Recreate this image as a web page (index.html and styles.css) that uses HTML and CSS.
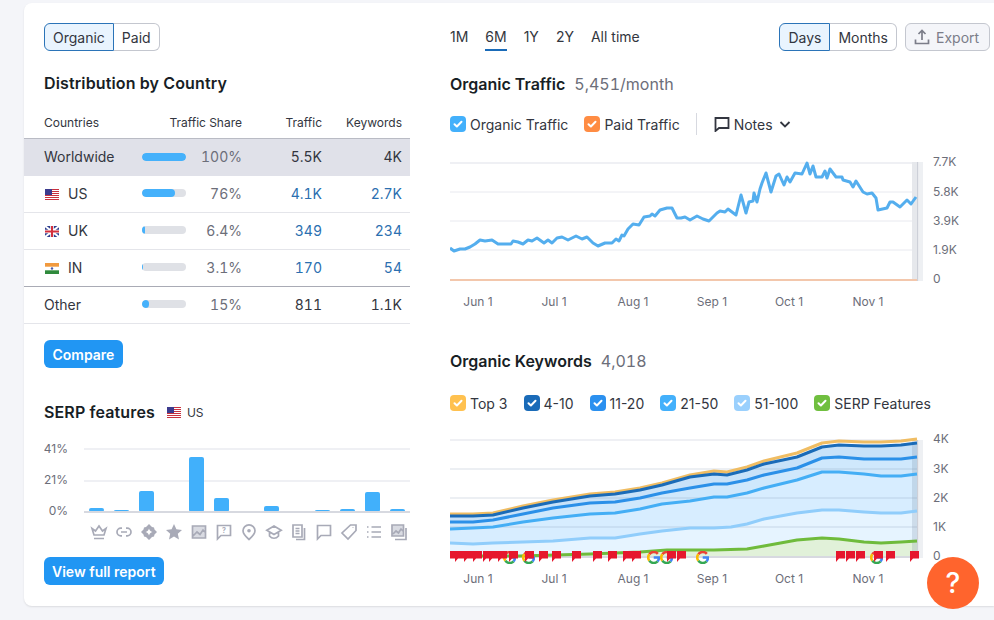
FILE: index.html
```html
<!DOCTYPE html>
<html lang="en">
<head>
    <meta charset="UTF-8">
    <meta name="viewport" content="width=device-width, initial-scale=1.0">
    <title>Domain Overview</title>
    <link rel="stylesheet" href="styles.css">
</head>
<body>
    <svg class="defs" width="0" height="0">
        <symbol id="flag-us" viewBox="0 0 14 11">
            <rect width="14" height="11" fill="#fff"/>
            <path d="M0 .5h14M0 2.5h14M0 4.5h14M0 6.5h14M0 8.5h14M0 10.5h14" stroke="#c9313e" stroke-width="1"/>
            <rect width="7" height="6" fill="#3c3b8e"/>
        </symbol>
        <symbol id="flag-uk" viewBox="0 0 14 11">
            <rect width="14" height="11" fill="#2f3f8f"/>
            <path d="M0 0l14 11M14 0L0 11" stroke="#fff" stroke-width="2"/>
            <path d="M7 0v11M0 5.5h14" stroke="#fff" stroke-width="3.6"/>
            <path d="M7 0v11M0 5.5h14" stroke="#d3303c" stroke-width="2"/>
        </symbol>
        <symbol id="flag-in" viewBox="0 0 14 11">
            <rect width="14" height="11" fill="#fff"/>
            <rect width="14" height="3.7" fill="#f19a3e"/>
            <rect y="7.3" width="14" height="3.7" fill="#2f8a3c"/>
            <circle cx="7" cy="5.5" r="1.2" fill="#4a5aa8"/>
        </symbol>
        <symbol id="check" viewBox="0 0 16 16">
            <path d="M4.5 8.2l2.4 2.3 4.6-4.7" fill="none" stroke="#fff" stroke-width="2" stroke-linecap="round" stroke-linejoin="round"/>
        </symbol>
        <symbol id="note" viewBox="0 0 11 11">
            <path d="M0 0h9v7.500H3L0 11z" fill="#e6172d"/>
        </symbol>
        <symbol id="g-logo" viewBox="0 0 12 12">
            <g fill="none" stroke-width="2.4">
                <path d="M10 2.6A5 5 0 0 0 2.2 3" stroke="#ea4335"/>
                <path d="M2.2 3a5 5 0 0 0 0 6" stroke="#fbbc05"/>
                <path d="M2.2 9a5 5 0 0 0 7.6.5" stroke="#34a853"/>
                <path d="M9.8 9.5A5 5 0 0 0 11 6H6.2" stroke="#4285f4"/>
            </g>
        </symbol>
    </svg>

    <main class="card">
        <section class="left">
            <div class="toggle">
                <button class="active">Organic</button>
                <button>Paid</button>
            </div>

            <h2 class="country-title">Distribution by Country</h2>

            <table class="countries">
                <thead>
                    <tr>
                        <th class="c-name">Countries</th>
                        <th colspan="2" class="number">Traffic Share</th>
                        <th class="number c-traffic">Traffic</th>
                        <th class="number c-keywords">Keywords</th>
                    </tr>
                </thead>
                <tbody>
                    <tr class="selected">
                        <td>Worldwide</td>
                        <td><div class="bar"><span style="width: 100%"></span></div></td>
                        <td class="number share">100%</td>
                        <td class="number">5.5K</td>
                        <td class="number">4K</td>
                    </tr>
                    <tr>
                        <td><svg class="flag"><use href="#flag-us"/></svg>US</td>
                        <td><div class="bar"><span style="width: 76%"></span></div></td>
                        <td class="number share">76%</td>
                        <td class="number link">4.1K</td>
                        <td class="number link">2.7K</td>
                    </tr>
                    <tr>
                        <td><svg class="flag"><use href="#flag-uk"/></svg>UK</td>
                        <td><div class="bar"><span style="width: 6.4%"></span></div></td>
                        <td class="number share">6.4%</td>
                        <td class="number link">349</td>
                        <td class="number link">234</td>
                    </tr>
                    <tr class="last-country">
                        <td><svg class="flag"><use href="#flag-in"/></svg>IN</td>
                        <td><div class="bar"><span style="width: 3.1%"></span></div></td>
                        <td class="number share">3.1%</td>
                        <td class="number link">170</td>
                        <td class="number link">54</td>
                    </tr>
                    <tr>
                        <td>Other</td>
                        <td><div class="bar"><span style="width: 15%"></span></div></td>
                        <td class="number share">15%</td>
                        <td class="number">811</td>
                        <td class="number">1.1K</td>
                    </tr>
                </tbody>
            </table>

            <button class="primary compare">Compare</button>

            <div class="serp-head">
                <h2>SERP features</h2>
                <svg class="flag"><use href="#flag-us"/></svg>
                <span>US</span>
            </div>

            <svg class="serp-chart" viewBox="44 440 366 105" width="366" height="105">
                <path class="grid" d="M84 449H410M84 481H410"/>
                <g class="serp-bars">
                    <rect x="89" y="508" width="15" height="4"/>
                    <rect x="114" y="510" width="15" height="2"/>
                    <rect x="139" y="491" width="15" height="21"/>
                    <rect x="189" y="457" width="15" height="55"/>
                    <rect x="214" y="498" width="15" height="14"/>
                    <rect x="264" y="506" width="15" height="6"/>
                    <rect x="315" y="510" width="15" height="2"/>
                    <rect x="340" y="509" width="15" height="3"/>
                    <rect x="365" y="492" width="15" height="20"/>
                    <rect x="390" y="509" width="15" height="3"/>
                </g>
                <path class="axis" d="M84 512H410"/>
                <text class="tick" x="68" y="453" text-anchor="end">41%</text>
                <text class="tick" x="68" y="484" text-anchor="end">21%</text>
                <text class="tick" x="68" y="515" text-anchor="end">0%</text>

                <g class="serp-icons">
                    <g transform="translate(91 524)"><path d="M1 4.500l3.500 2.500L8 2l3.500 5L15 4.500l-2 6.500H3zM3 14.500h10"/></g>
                    <g transform="translate(116 524)"><path d="M6 4.200H4.800a3.800 3.800 0 0 0 0 7.600H6M10 4.200h1.200a3.800 3.800 0 0 1 0 7.600H10M5 8h6"/></g>
                    <g transform="translate(141 524)"><path class="solid" fill-rule="evenodd" d="M8 0l3 3 2 .5.5 2L16 8l-2.500 2.500-.5 2-2 .5L8 16l-3-3-2-.5-.5-2L0 8l2.500-2.500.5-2 2-.5zM8 4.500C7.500 6.500 6.500 7.500 4.500 8c2 .5 3 1.500 3.500 3.500.5-2 1.500-3 3.500-3.500-2-.5-3-1.500-3.500-3.500z"/></g>
                    <g transform="translate(166 524)"><path class="solid" d="M8 0l2.400 5.300 5.600.6-4.200 3.800L13 15.500 8 12.600l-5 2.900 1.200-5.800L0 5.900l5.600-.6z"/></g>
                    <g transform="translate(191 524)"><rect x="1.500" y="2" width="13" height="12" class="soft"/><path d="M1.500 2h13v12h-13zM2 12l4-4 3 2.500 3-4.500 2.500 2.500"/></g>
                    <g transform="translate(216 524)"><path d="M1.500 1.500h13v10H5L1.500 15z"/><text class="mini" x="8" y="9.300" text-anchor="middle">?</text></g>
                    <g transform="translate(241 524)"><path d="M8 15.500C4.500 12.500 2 9.800 2 6.800a6 6 0 0 1 12 0c0 3-2.500 5.700-6 8.700z"/><circle class="solid" cx="8" cy="6.800" r="1.800"/></g>
                    <g transform="translate(266 524)"><path d="M8 2L.8 6.300 8 10.500l7.200-4.200zM3.500 8.500V12c2.500 3 6.500 3 9 0V8.500"/></g>
                    <g transform="translate(291 524)"><path d="M2 1h9v12H2zM4.500 4.500h4M4.500 7h4M4.500 9.500h4M13.500 4v11.500H5"/></g>
                    <g transform="translate(316 524)"><path d="M1.500 1.500h13v10H5L1.500 15z"/></g>
                    <g transform="translate(341 524)"><path d="M9.500 1H15v5.500L7 15 1 9zM12 3.500v.5"/></g>
                    <g transform="translate(366 524)"><path d="M5.500 3H15M5.500 8H15M5.500 13H15M1 3h1.500M1 8h1.500M1 13h1.500"/></g>
                    <g transform="translate(391 524)"><rect x="1" y="1" width="11.500" height="11" class="soft"/><path d="M1 1h11.500v11H1zM2 10l3-3 2.500 2 2.500-4 2 2M15 4v11.500H4"/></g>
                </g>
            </svg>

            <button class="primary report">View full report</button>
        </section>

        <section class="right">
            <div class="top-bar">
                <nav class="ranges">
                    <a>1M</a>
                    <a class="current">6M</a>
                    <a>1Y</a>
                    <a>2Y</a>
                    <a>All time</a>
                </nav>
                <div class="top-actions">
                    <div class="toggle">
                        <button class="active">Days</button>
                        <button>Months</button>
                    </div>
                    <button class="export">
                        <svg width="16" height="16" viewBox="0 0 16 16"><path d="M8 11V2M4.500 5L8 1.500 11.500 5M1.500 10.500v4h13v-4" fill="none" stroke="currentColor" stroke-width="1.700"/></svg>
                        Export
                    </button>
                </div>
            </div>

            <h2 class="chart-title traffic-title">Organic Traffic <span>5,451/month</span></h2>

            <div class="legend">
                <label><i class="box c-organic"><svg><use href="#check"/></svg></i>Organic Traffic</label>
                <label><i class="box c-paid"><svg><use href="#check"/></svg></i>Paid Traffic</label>
                <div class="divider"></div>
                <div class="notes">
                    <svg width="16" height="16" viewBox="0 0 16 16"><path d="M1.500 2h13v10H5l-3.500 3z" fill="none" stroke="#333640" stroke-width="1.800"/></svg>
                    Notes
                    <svg class="chevron" width="12" height="12" viewBox="0 0 12 12"><path d="M1.500 4L6 8.500 10.500 4" fill="none" stroke="#333640" stroke-width="1.800"/></svg>
                </div>
            </div>

            <svg class="chart traffic-chart" viewBox="450 155 540 157" width="540" height="157">
                <path class="grid top" d="M450 163H917"/>
                <path class="grid" d="M450 192H917M450 221H917M450 250H917"/>
                <rect class="band" x="912" y="162" width="5" height="119"/>
                <rect class="band-line" x="917" y="162" width="1.500" height="119"/>
                <rect class="band-edge" x="918.500" y="162" width="4.500" height="119"/>
                <path class="paid-line" d="M450 280H917"/>
                <polyline class="traffic-line" points="450,248 454,251 460,249 465,249 470,247 475,244 480,240 485,241 492,240 498,244 503,244 511,244 513,241 518,242 523,244 528,240 532,241 537,238 544,243 548,240 552,243 557,238 562,237 568,240 576,236 582,239 587,237 593,243 598,246 605,243 612,243 616,239 619,241 622,235 624,236 628,229 633,224 639,225 644,217 650,216 652,214 655,216 660,210 667,208 672,208 677,218 681,218 685,217 690,220 697,216 703,219 709,221 713,217 717,213 720,211 725,212 728,209 736,215 741,195 746,213 749,202 753,201 754,193 757,202 760,189 762,183 766,173 771,192 776,176 779,174 784,185 787,177 790,182 795,173 802,174 807,163 810,174 813,166 816,177 822,177 825,171 827,178 830,169 836,177 842,177 843,180 850,182 853,187 856,181 863,192 867,194 872,193 876,198 878,210 887,208 890,202 893,202 900,207 907,200 911,204 916,197"/>
                <g class="tick" text-anchor="middle">
                    <text x="478" y="306">Jun 1</text>
                    <text x="554" y="306">Jul 1</text>
                    <text x="633" y="306">Aug 1</text>
                    <text x="712" y="306">Sep 1</text>
                    <text x="789" y="306">Oct 1</text>
                    <text x="868" y="306">Nov 1</text>
                </g>
                <g class="tick">
                    <text x="933" y="166">7.7K</text>
                    <text x="933" y="196">5.8K</text>
                    <text x="933" y="225">3.9K</text>
                    <text x="933" y="254">1.9K</text>
                    <text x="933" y="283">0</text>
                </g>
            </svg>

            <h2 class="chart-title keywords-title">Organic Keywords <span>4,018</span></h2>

            <div class="legend legend-keywords">
                <label><i class="box c-top3"><svg><use href="#check"/></svg></i>Top 3</label>
                <label><i class="box c-4-10"><svg><use href="#check"/></svg></i>4-10</label>
                <label><i class="box c-11-20"><svg><use href="#check"/></svg></i>11-20</label>
                <label><i class="box c-21-50"><svg><use href="#check"/></svg></i>21-50</label>
                <label><i class="box c-51-100"><svg><use href="#check"/></svg></i>51-100</label>
                <label><i class="box c-serp"><svg><use href="#check"/></svg></i>SERP Features</label>
            </div>

            <svg class="chart keywords-chart" viewBox="450 430 540 160" width="540" height="160">
                <path class="grid top" d="M450 440H917"/>

                <!-- opaque bands, painted from the top series down -->
                <g class="areas">
                    <polygon class="a-4" points="450,516 473,516 493,515 523,508 553,502 590,496 615,494 640,490 662,485 690,477 714,474 727,475 747,470 764,464 797,457 822,447 839,445 864,446 881,446 901,445 917,443 917,557 450,557"/>
                    <polygon class="a-11" points="450,522 473,522 493,520 523,514 553,508 590,503 615,502 640,498 662,493 690,488 714,484 727,484 747,480 764,475 797,468 822,458 839,457 864,459 881,459 901,459 917,457 917,557 450,557"/>
                    <polygon class="a-21" points="450,529 473,528 493,527 523,522 553,518 590,514 615,513 640,509 662,504 690,501 714,497 727,497 747,493 764,488 797,480 822,472 839,472 864,474 881,476 901,476 917,474 917,557 450,557"/>
                    <polygon class="a-51" points="450,543 473,544 493,543 523,542 553,541 590,538 615,538 640,534 662,531 690,528 714,528 731,527 747,524 764,519 797,513 822,510 839,510 864,512 881,513 901,513 917,511 917,557 450,557"/>
                    <polygon class="a-serp" points="450,556 520,556 590,554 640,552 667,550 714,550 747,549 764,546 797,540 822,538 839,539 864,542 881,543 901,542 917,541 917,557 450,557"/>
                </g>
                <path class="grid over" d="M450 469H917M450 498H917M450 527H917"/>
                <rect class="band-over" x="912" y="440" width="5" height="118"/>
                <rect class="band-line" x="917" y="440" width="1.500" height="118"/>
                <rect class="band-edge" x="918.500" y="440" width="4.500" height="118"/>
                <path class="axis" d="M450 557H917"/>

                <polyline class="kw-line l-serp" points="450,556 520,556 590,554 640,552 667,550 714,550 747,549 764,546 797,540 822,538 839,539 864,542 881,543 901,542 917,541"/>
                <polyline class="kw-line l-51" points="450,543 473,544 493,543 523,542 553,541 590,538 615,538 640,534 662,531 690,528 714,528 731,527 747,524 764,519 797,513 822,510 839,510 864,512 881,513 901,513 917,511"/>
                <polyline class="kw-line l-21" points="450,529 473,528 493,527 523,522 553,518 590,514 615,513 640,509 662,504 690,501 714,497 727,497 747,493 764,488 797,480 822,472 839,472 864,474 881,476 901,476 917,474"/>
                <polyline class="kw-line l-11" points="450,522 473,522 493,520 523,514 553,508 590,503 615,502 640,498 662,493 690,488 714,484 727,484 747,480 764,475 797,468 822,458 839,457 864,459 881,459 901,459 917,457"/>
                <polyline class="kw-line l-top" points="450,514 473,514 493,513 523,506 553,500 590,494 615,492 640,488 662,483 690,475 714,471 727,472 747,467 764,461 797,453 822,443 839,441 864,442 881,442 901,441 917,439"/>
                <polyline class="kw-line l-4" points="450,516 473,516 493,515 523,508 553,502 590,496 615,494 640,490 662,485 690,477 714,474 727,475 747,470 764,464 797,457 822,447 839,445 864,446 881,446 901,445 917,443"/>

                <use href="#g-logo" x="503" y="551" width="13" height="13"/>
                <use href="#g-logo" x="522" y="551" width="13" height="13"/>
                <use href="#g-logo" x="647" y="551" width="13" height="13"/>
                <use href="#g-logo" x="660" y="551" width="13" height="13"/>
                <use href="#g-logo" x="696" y="551" width="13" height="13"/>
                <use href="#g-logo" x="870" y="551" width="13" height="13"/>

                <use href="#note" x="446" y="551" width="11" height="11"/>
                <use href="#note" x="455" y="551" width="11" height="11"/>
                <use href="#note" x="464" y="551" width="11" height="11"/>
                <use href="#note" x="473" y="551" width="11" height="11"/>
                <use href="#note" x="483" y="551" width="11" height="11"/>
                <use href="#note" x="489" y="551" width="11" height="11"/>
                <use href="#note" x="498" y="551" width="11" height="11"/>
                <use href="#note" x="509" y="551" width="11" height="11"/>
                <use href="#note" x="525" y="551" width="11" height="11"/>
                <use href="#note" x="539" y="551" width="11" height="11"/>
                <use href="#note" x="552" y="551" width="11" height="11"/>
                <use href="#note" x="572" y="551" width="11" height="11"/>
                <use href="#note" x="593" y="551" width="11" height="11"/>
                <use href="#note" x="608" y="551" width="11" height="11"/>
                <use href="#note" x="623" y="551" width="11" height="11"/>
                <use href="#note" x="632" y="551" width="11" height="11"/>
                <use href="#note" x="667" y="551" width="11" height="11"/>
                <use href="#note" x="677" y="551" width="11" height="11"/>
                <use href="#note" x="836" y="551" width="11" height="11"/>
                <use href="#note" x="846" y="551" width="11" height="11"/>
                <use href="#note" x="856" y="551" width="11" height="11"/>
                <use href="#note" x="874" y="551" width="11" height="11"/>
                <use href="#note" x="886" y="551" width="11" height="11"/>
                <use href="#note" x="910" y="551" width="11" height="11"/>

                <g class="tick" text-anchor="middle">
                    <text x="478" y="583">Jun 1</text>
                    <text x="554" y="583">Jul 1</text>
                    <text x="633" y="583">Aug 1</text>
                    <text x="712" y="583">Sep 1</text>
                    <text x="789" y="583">Oct 1</text>
                    <text x="868" y="583">Nov 1</text>
                </g>
                <g class="tick">
                    <text x="933" y="443">4K</text>
                    <text x="933" y="473">3K</text>
                    <text x="933" y="502">2K</text>
                    <text x="933" y="531">1K</text>
                    <text x="933" y="560">0</text>
                </g>
            </svg>
        </section>
    </main>

    <button class="help">?</button>
</body>
</html>
```

FILE: styles.css
```css
html, body {
    height: 100%;
}

body {
    margin: 0;
    background-color: #f4f5f9;
    color: #333640;
    font-family: Inter, 'Noto Sans', sans-serif;
    font-size: 14px;
    overflow: hidden;
}

button {
    font-family: inherit;
}

.defs {
    position: absolute;
}

.card {
    display: flex;
    gap: 40px;
    width: 970px;
    height: 603px;
    margin: 3px 0 0 24px;
    background: white;
    border-radius: 8px 0 0 8px;
    box-shadow: 0 1px 2px rgba(0,0,0,0.1);
}

.left {
    width: 386px;
    flex-shrink: 0;
    padding-top: 20px;
}

.right {
    width: 544px;
    padding-top: 20px;
}

h2 {
    margin: 0;
    font-size: 16px;
    line-height: 20px;
    font-weight: 600;
    color: #181e25;
}

/* toggles */
.toggle {
    display: inline-flex;
    height: 28px;
}

.left > .toggle {
    margin-left: 20px;
    display: flex;
    width: max-content;
}

.toggle button {
    height: 28px;
    padding: 0 8px;
    border: 1px solid #c4c7cf;
    background: white;
    color: #333640;
    font-size: 14px;
}

.toggle button:first-child {
    border-radius: 6px 0 0 6px;
}

.toggle button:last-child {
    border-radius: 0 6px 6px 0;
    border-left: none;
}

.toggle button.active {
    background-color: #e9f4fe;
    border-color: #2b74b8;
}

/* country table */
.country-title {
    margin: 22px 0 0 20px;
    letter-spacing: 0.13px;
}

.countries {
    width: 386px;
    margin-top: 12px;
    table-layout: fixed;
    border-collapse: collapse;
    font-variant-numeric: tabular-nums;
}

.countries th {
    height: 31px;
    padding: 2px 0 0 0;
    font-size: 12px;
    font-weight: 400;
    text-align: left;
    border-bottom: 1px solid #b9bbc4;
}

.countries td {
    height: 34px;
    padding: 0 0 2px 0;
    border-bottom: 1px solid #e4e5ea;
}

.countries th:first-child,
.countries td:first-child {
    width: 98px;
    padding-left: 20px;
}

.countries th:last-child,
.countries td:last-child {
    padding-right: 8px;
}

.countries td:nth-child(2) {
    width: 44px;
}

.countries td:nth-child(3) {
    width: 56px;
}

.countries th.c-traffic {
    width: 80px;
}

.countries th.c-keywords {
    width: 80px;
}

.countries .number {
    text-align: right;
}

.countries .selected td {
    height: 35px;
    background-color: #e0e1e9;
    border-bottom: none;
}

.countries .last-country td {
    border-bottom-color: #a9abb5;
}

.share {
    color: #6c6e79;
}

.link {
    color: #2b6fb0;
}

.flag {
    width: 14px;
    height: 11px;
    margin: 0 9px 0 1px;
    vertical-align: -1px;
}

.bar {
    width: 44px;
    height: 8px;
    border-radius: 4px;
    background-color: #dfe1e6;
    overflow: hidden;
}

.bar span {
    display: block;
    height: 100%;
    border-radius: 4px;
    background-color: #45b1fb;
}

/* buttons */
.primary {
    display: block;
    height: 28px;
    padding: 0 8px;
    border: none;
    border-radius: 6px;
    background-color: #2196f3;
    color: white;
    font-size: 14px;
    font-weight: 600;
}

.compare {
    margin: 16px 0 0 20px;
    padding: 0 8.5px;
}

.report {
    margin: 12px 0 0 20px;
}

/* serp */
.serp-head {
    display: flex;
    align-items: center;
    margin: 34px 0 0 20px;
    font-size: 12px;
}

.serp-head h2 {
    margin-right: 11px;
    letter-spacing: 0.13px;
}

.serp-head .flag {
    margin-right: 6px;
    flex-shrink: 0;
}

.serp-chart {
    display: block;
    margin-top: 18px;
    margin-left: 20px;
}

.grid {
    stroke: #e8e9ef;
    stroke-width: 1;
    fill: none;
}

.grid.top {
    stroke: #eff0f4;
    stroke-width: 2;
}

.grid.over {
    stroke: rgba(120, 140, 170, 0.28);
}

.serp-chart .grid {
    stroke: #eff0f4;
    stroke-width: 2;
}

.axis {
    stroke: #d7d9e0;
    stroke-width: 2;
    fill: none;
}

.serp-bars rect {
    fill: #41b0fb;
    rx: 2px;
}

.tick {
    font-size: 12px;
    fill: #6c6e79;
}

.serp-icons path,
.serp-icons circle {
    fill: none;
    stroke: #a8aab7;
    stroke-width: 1.7;
}

.serp-icons .solid {
    fill: #a8aab7;
    stroke: none;
}

.serp-icons .soft {
    fill: #d9dbe2;
}

.serp-icons .mini {
    font-size: 7px;
    font-weight: 700;
    fill: #a8aab7;
}

/* right side */
.top-bar {
    display: flex;
    justify-content: space-between;
    align-items: flex-start;
    padding-right: 4px;
}

.ranges {
    display: flex;
    gap: 17px;
    height: 28px;
}

.ranges a {
    position: relative;
    font-size: 14px;
    line-height: 28px;
}

.ranges .current::after {
    content: "";
    position: absolute;
    left: 0;
    right: 0;
    top: 26px;
    height: 2px;
    background-color: #1a6bb8;
}

.top-actions {
    display: flex;
    gap: 8px;
}

.export {
    display: flex;
    align-items: center;
    gap: 6px;
    height: 28px;
    padding: 0 0 0 8px;
    width: 85px;
    border: 1px solid #c4c7cf;
    border-radius: 6px;
    background-color: #f4f5f9;
    color: #7b7d89;
    font-size: 14px;
}

.chart-title span {
    margin-left: 5px;
    font-weight: 400;
    color: #6c6e79;
    font-variant-numeric: tabular-nums;
}

.traffic-title {
    margin-top: 23px;
}

.keywords-title {
    margin-top: 39px;
}

.legend {
    display: flex;
    align-items: center;
    gap: 16px;
    height: 20px;
    margin-top: 20px;
}

.legend-keywords {
    margin-top: 22px;
}

.legend label {
    display: flex;
    align-items: center;
    gap: 4px;
}

.box {
    display: block;
    width: 16px;
    height: 16px;
    border-radius: 4px;
}

.box svg {
    display: block;
    width: 16px;
    height: 16px;
}

.c-organic, .c-21-50 { background-color: #43b0fb; }
.c-paid { background-color: #ff8c43; }
.c-top3 { background-color: #ffc14f; }
.c-4-10 { background-color: #1a6bb8; }
.c-11-20 { background-color: #2b90ef; }
.c-51-100 { background-color: #9ad0fd; }
.c-serp { background-color: #70bf3f; }

.divider {
    width: 1px;
    height: 22px;
    background-color: #d7d9e0;
}

.notes {
    display: flex;
    align-items: center;
    gap: 4px;
    margin-left: 1px;
}

.chevron {
    margin-left: 2px;
}

.chart {
    display: block;
}

.traffic-chart {
    margin-top: 21px;
}

.keywords-chart {
    margin-top: 17px;
}

.band {
    fill: #e6e8ec;
}

.band-over {
    fill: rgba(120, 135, 160, 0.22);
}

.band-line {
    fill: #cdd0d8;
}

.band-edge {
    fill: #eef0f3;
}

.paid-line {
    stroke: #f3c7ac;
    stroke-width: 2;
}

.traffic-line {
    fill: none;
    stroke: #54aeee;
    stroke-width: 3;
    stroke-linejoin: round;
}

.a-4 { fill: #c8e2f9; }
.a-11 { fill: #cfe8fc; }
.a-21 { fill: #d7edff; }
.a-51 { fill: #e6f4ff; }
.a-serp { fill: #e1f1d9; }

.kw-line {
    fill: none;
    stroke-width: 3;
    stroke-linejoin: round;
}

.l-top { stroke: #f0bd63; }
.l-4 { stroke: #1a6bb8; }
.l-11 { stroke: #2b90e8; }
.l-21 { stroke: #44aef5; }
.l-51 { stroke: #90cdfb; }
.l-serp { stroke: #6fbb3c; }

.help {
    position: fixed;
    left: 927px;
    top: 557px;
    width: 52px;
    height: 52px;
    padding: 0;
    border: none;
    border-radius: 50%;
    background-color: #ff642d;
    color: white;
    font-size: 28px;
    font-weight: 500;
}
```
